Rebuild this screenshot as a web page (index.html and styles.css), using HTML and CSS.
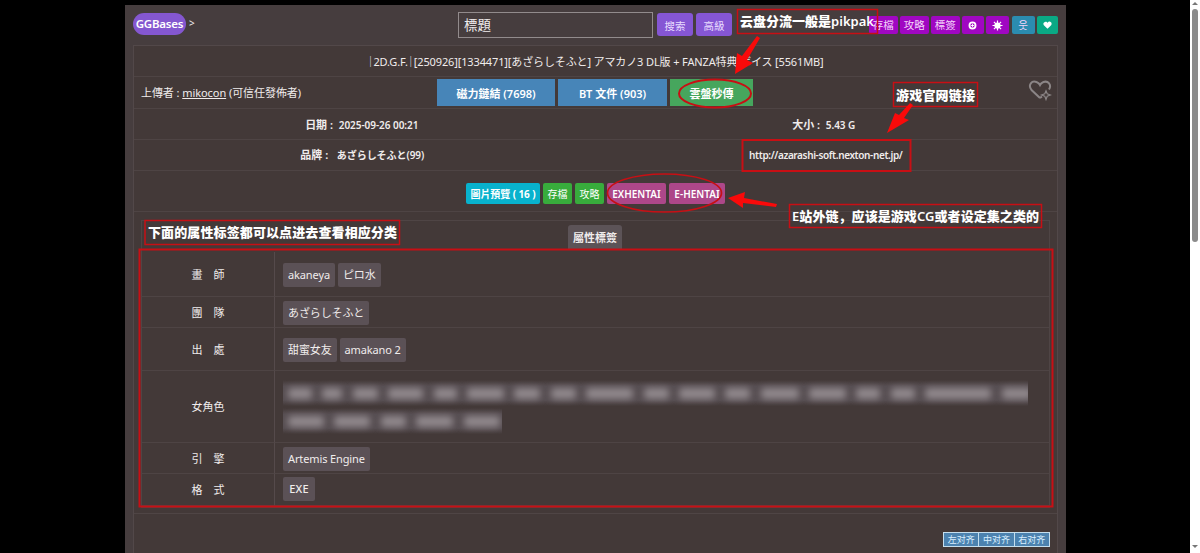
FILE: index.html
```html
<!DOCTYPE html>
<html lang="zh-Hant">
<head>
<meta charset="utf-8">
<title>GGBases</title>
<link rel="stylesheet" href="styles.css">
</head>
<body>
<main class="page">
  <header class="top">
    <div class="brand"><a class="logo">GGBases</a><span>&gt;</span></div>
    <div class="search"><div class="field">標題</div><a class="btn violet">搜索</a><a class="btn violet">高級</a></div>
    <nav class="tools">
      <a class="tool">存檔</a><a class="tool">攻略</a><a class="tool">標簽</a>
      <a class="tool icon"><svg viewBox="0 0 10 10" width="9" height="9"><circle cx="5" cy="5" r="3.4" fill="none" stroke="#fff" stroke-width="2"/><path d="M5 3v4M3 5h4" stroke="#fff"/></svg></a>
      <a class="tool icon"><svg viewBox="0 0 12 12" width="11" height="11"><circle cx="6" cy="6" r="3.4" fill="#fff"/><path d="M6 .5v11M.5 6h11M2.1 2.1l7.8 7.8M9.9 2.1L2.1 9.9" stroke="#fff" stroke-width="1.3"/></svg></a>
      <a class="tool icon teal">웃</a>
      <a class="tool icon green"><svg viewBox="0 0 12 11" width="9" height="8"><path d="M6 10.5L1 5.8C-1 3 2 .2 4.600 1.100L6 2.500 7.400 1.100C10-.2 13 3 11 5.800z" fill="#fff"/></svg></a>
    </nav>
  </header>
  <section class="sheet">
    <div class="row title"><span><i class="bar">│</i>2D.G.F.<i class="bar">│</i>[250926][1334471][あざらしそふと] アマカノ3 DL版 + FANZA特典 ボイス [5561MB]</span></div>
    <div class="row actions">
      <div class="uploader">上傳者 : <u>mikocon</u> (可信任發佈者)</div>
      <a class="down magnet">磁力鏈結 (7698)</a><a class="down bt">BT 文件 (903)</a><a class="down cloud">雲盤秒傳</a>
      <svg class="fav" viewBox="0 0 24 22" width="24" height="22" fill="none" stroke="#8b8586" stroke-width="2"><path d="M12 18L3.500 10C-.5 5 4 0 8.500 2Q11 3 12 5Q13 3 15.500 2C20 .4 24 5 21 9.500M12 18l2-1.500"/><path d="M18 10.800l1.200 3 3.300 1.200-3.300 1.200-1.200 3.300-1.200-3.300-3.300-1.200 3.300-1.200z" stroke-width="1.200"/></svg>
    </div>
    <div class="row pair"><b>日期 :&nbsp; <small>2025-09-26 00:21</small></b><b class="size">大小 :&nbsp; <small>5.43 G</small></b></div>
    <div class="row pair"><b class="brandname">品牌 :&nbsp;&nbsp; <small>あざらしそふと(99)</small></b><b class="site">http://azarashi-soft.nexton-net.jp/</b></div>
    <div class="row links"><a class="link cyan">圖片預覽 ( 16 )</a><a class="link lime">存檔</a><a class="link lime">攻略</a><a class="link pink ex">EXHENTAI</a><a class="link pink eh">E-HENTAI</a></div>
    <div class="tags">
      <div class="tabbar"><span class="tab">屬性標簽</span></div>
      <div class="attrs">
        <div class="name">畫　師</div><div class="vals"><a class="tag">akaneya</a><a class="tag">ピロ水</a></div>
        <div class="name">團　隊</div><div class="vals"><a class="tag">あざらしそふと</a></div>
        <div class="name">出　處</div><div class="vals"><a class="tag">甜蜜女友</a><a class="tag">amakano 2</a></div>
        <div class="name">女角色</div>
        <div class="vals hidden-tags">
          <div class="blurline"><i style="width:24px"></i><i style="width:20px"></i><i style="width:25px"></i><i style="width:35px"></i><i style="width:23px"></i><i style="width:37px"></i><i style="width:26px"></i><i style="width:25px"></i><i style="width:47px"></i><i style="width:25px"></i><i style="width:36px"></i><i style="width:25px"></i><i style="width:38px"></i><i style="width:37px"></i><i style="width:24px"></i><i style="width:24px"></i><i style="width:66px"></i><i style="width:30px"></i></div>
          <div class="blurline short"><i style="width:36px"></i><i style="width:36px"></i><i style="width:25px"></i><i style="width:37px"></i><i style="width:36px"></i></div>
        </div>
        <div class="name">引　擎</div><div class="vals"><a class="tag">Artemis Engine</a></div>
        <div class="name">格　式</div><div class="vals last"><a class="tag exe">EXE</a></div>
      </div>
    </div>
    <div class="foot"><div class="align"><span>左对齐</span><span>中对齐</span><span>右对齐</span></div></div>
  </section>
</main>
<aside class="scroll"><i class="up"></i><i class="thumb"></i><i class="dn"></i></aside>
<svg class="notes" lang="zh-CN" viewBox="0 0 1200 553" width="1200" height="553">
  <g fill="none" stroke="#c80f14" stroke-width="1.500">
    <rect x="737.500" y="9.500" width="140" height="24"/>
    <rect x="893.500" y="82.500" width="84" height="24"/>
    <rect x="789.500" y="204.500" width="252" height="23"/>
    <rect x="145" y="220.500" width="254.500" height="24"/>
    <rect x="742.500" y="140" width="168" height="31" stroke-width="2"/>
    <rect x="139.500" y="249.500" width="913" height="257" stroke-width="2"/>
    <ellipse cx="715" cy="93.500" rx="36" ry="14" stroke-width="2"/>
    <ellipse cx="664.500" cy="193" rx="57" ry="19" stroke-width="1.700"/>
  </g>
  <g fill="#f90a0a">
    <path d="M757 36l3 2-13 22 6 3-18 11 2-21 5 3z"/>
    <path d="M910 103l3 2-9 13 5 2-22 13 8-20 4 2z"/>
    <path d="M728 198l17-6-1 6 33 6-1 3-33-4v5z"/>
  </g>
  <g class="note-text">
    <text x="740" y="26" textLength="134">云盘分流一般是<tspan class="latin">pikpak</tspan></text>
    <text x="896" y="100" textLength="79">游戏官网链接</text>
    <text x="792" y="221" textLength="247"><tspan class="latin">E</tspan>站外链，应该是游戏<tspan class="latin">CG</tspan>或者设定集之类的</text>
    <text x="148" y="237" textLength="249">下面的属性标签都可以点进去查看相应分类</text>
  </g>
</svg>
</body>
</html>
```
FILE: styles.css
```css
* { box-sizing: border-box; }
body { margin: 0; height: 553px; overflow: hidden; background: #000; color: #f0ecec; font: 11px/16px "Noto Sans", "Noto Sans CJK TC", "Noto Sans CJK JP", "Noto Sans CJK KR", sans-serif; display: flex; }
.page { width: 941px; height: 548px; margin: 5px 124px 0 125px; padding: 0 8px; background: #463d3e; flex: none; }
.top { height: 40px; display: flex; align-items: flex-start; }
.brand { width: 325px; display: flex; gap: 3px; padding-top: 8px; line-height: 21px; font-size: 10px; }
.logo { width: 53px; height: 22px; border-radius: 11px; background: #8457d0; color: #fff; font-size: 11.500px; font-weight: 600; line-height: 22px; letter-spacing: -.2px; text-align: center; }
.search { display: flex; gap: 3px; padding-top: 7px; }
.field { width: 195px; height: 26px; border: 1px solid #928b8c; padding-left: 5px; font-size: 13.500px; line-height: 24px; margin-right: 1px; }
.btn { width: 36px; height: 23px; margin-top: 1px; border-radius: 3px; color: #e8dcff; line-height: 26px; text-align: center; font-size: 10.500px; }
.violet { background: #8556d4; }
.tools { display: flex; gap: 2.500px; margin-left: auto; padding: 11px 0 0 0; }
.tool { width: 28.500px; height: 18px; border-radius: 2px; background: #a007c2; color: #f4d5fa; font-size: 10.500px; line-height: 18px; text-align: center; }
.tool.icon { width: 23px; display: flex; align-items: center; justify-content: center; flex: none; }
.tool.icon:nth-child(4) { width: 21.500px; }
.tool.teal { background: #2b8cb0; }
.tool.green { width: 21px; background: #0aa985; }
.sheet { height: 508px; background: #433938; border: 1px solid #524849; border-bottom: 0; }
.row { border-bottom: 1px solid #4e4444; display: flex; align-items: center; }
.title { height: 31px; justify-content: center; white-space: nowrap; padding: 2px 0 0 0; letter-spacing: -.13px; }
.bar { font-style: normal; display: inline-block; width: 6px; text-indent: -2.500px; }
.actions { height: 32px; gap: 3px; }
.uploader { width: 300px; padding-left: 7px; letter-spacing: -.07px; }
.down { height: 27px; background: #4785b8; color: #fff; font-weight: 600; line-height: 29px; text-align: center; }
.magnet { width: 118px; }
.bt { width: 109px; }
.cloud { width: 83px; background: #46a65d; }
.fav { margin: -4px 5px 0 auto; }
.pair { height: 31px; display: grid; grid-template-columns: 1fr 1fr; text-align: center; font-weight: 600; }
.pair b { font-weight: 600; padding: 1px 6px 0 0; }
.pair small { font-size: 10px; letter-spacing: -.05px; }
.pair .brandname { padding: 0 5px 0 0; }
.pair .size { padding-right: 5px; }
.pair .site { font-size: 10px; padding: 0 1px 0 0; letter-spacing: -.38px; }
.links { height: 41px; justify-content: center; gap: 3px; padding: 4px 0 0 0; }
.link { height: 21px; border-radius: 2px; color: #fff; line-height: 22px; text-align: center; font-size: 10px; }
.cyan { width: 74px; background: #08b2cd; font-weight: 700; letter-spacing: -.1px; }
.lime { width: 29px; background: #38ac3c; }
.pink { background: #ad4789; font-weight: 600; }
.ex { width: 59px; }
.eh { width: 56px; white-space: nowrap; }
.tags { height: 288px; margin: 8px 7px 0; border: 1px solid #4f4545; }
.tabbar { height: 31px; display: flex; justify-content: center; align-items: flex-start; padding: 4px 1px 0 0; }
.tab { width: 54px; height: 25px; border-radius: 3px 3px 0 0; background: #5c5357; font-weight: 700; line-height: 25px; text-align: center; }
.attrs { display: grid; grid-template-columns: 133px 1fr; grid-template-rows: 45px 31px 43px 72px 31px 32px; }
.name { display: flex; align-items: center; justify-content: center; border-right: 1px solid #554a4b; border-bottom: 1px solid #4e4444; padding-top: 1px; }
.vals { display: flex; align-items: center; gap: 3px; padding: 1px 0 0 8px; border-bottom: 1px solid #4e4444; }
.vals.last { padding: 0 0 1px 8px; }
.tag { height: 24px; border-radius: 2px; background: #5b5156; padding: 0 5px; line-height: 24px; letter-spacing: -.12px; }
.exe { width: 32px; text-align: center; font-weight: 500; padding: 0; letter-spacing: .2px; }
.vals.hidden-tags { flex-direction: column; align-items: flex-start; justify-content: center; gap: 2px; }
.blurline { display: flex; gap: 10.400px; width: 745px; height: 26px; align-items: center; padding-left: 5px; overflow: hidden; background: linear-gradient(transparent 0, #564d51 6px, #564d51 20px, transparent 26px); }
.blurline.short { width: 219px; }
.blurline i { height: 11px; flex: none; background: #91898d; border-radius: 4px; filter: blur(3.500px); }
.foot { height: 45px; margin-top: 5px; border-top: 1px solid #4f4545; display: flex; justify-content: flex-end; align-items: flex-start; padding: 18px 7px 0 0; }
.align { display: flex; width: 107px; border: 1px solid #c4deee; background: #4c82af; }
.align span { flex: 1; height: 13px; font-size: 9px; line-height: 13px; color: #d9efff; text-align: center; }
.align span + span { border-left: 1px solid #c4deee; }
.scroll { width: 10px; height: 553px; background: #fff; display: flex; flex-direction: column; align-items: center; padding-top: 2px; flex: none; }
.up, .dn { border: 3px solid transparent; border-top: 0; border-bottom: 3px solid #777; }
.dn { margin: auto 0 5px; border-top: 3px solid #777; border-bottom: 0; }
.thumb { width: 6px; height: 233px; margin-top: 4px; border-radius: 3px; background: #8b8b8b; }
.notes { position: absolute; left: 0; top: 0; }
.note-text { fill: #fff; font: 900 13px "Noto Sans CJK SC", sans-serif; }
.latin { font-family: "Noto Sans", sans-serif; font-weight: 600; }
```
